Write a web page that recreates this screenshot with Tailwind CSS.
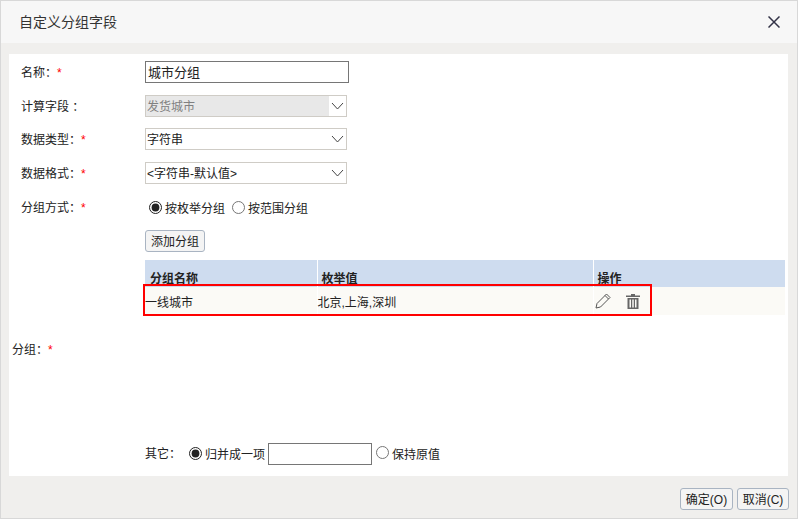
<!DOCTYPE html>
<html lang="zh-CN">
	<head>
		<meta charset="UTF-8" />
		<title>自定义分组字段</title>
		<script src="https://cdn.jsdelivr.net/npm/@tailwindcss/browser@4"></script>
	</head>
	<body class="bg-white">
		<div class="w-[798px] h-[519px] flex flex-col bg-[#f0efed] border border-[#d8d8d8] font-['Liberation_Sans','Noto_Sans_CJK_SC',sans-serif] text-[12px] leading-none text-[#222] overflow-hidden">
			<!-- Title bar -->
			<div class="h-[42px] shrink-0 bg-[#f7f7f7] flex items-center justify-between pl-[18px] pr-[17px]">
				<span class="text-[14px] text-[#333]">自定义分组字段</span>
				<svg class="w-[12px] h-[12px] text-[#333347]" viewBox="0 0 12 12" fill="none" stroke="currentColor" stroke-width="1.5">
					<path d="M0.5 0.5 L11.5 11.5 M11.5 0.5 L0.5 11.5" />
				</svg>
			</div>

			<!-- Form panel -->
			<div class="relative mt-[11px] ml-[8px] w-[779px] h-[422px] shrink-0 bg-white flex flex-col pt-[7px]">
				<div class="h-[22px] flex items-center pl-[12px]">
					<span class="w-[124px] mt-[2px]">名称：<b class="text-[#ff0000] font-normal">*</b></span>
					<div class="w-[204px] h-[22px] border border-[#767676] flex items-center pl-[2px] text-[13px]">城市分组</div>
				</div>
				<div class="h-[22px] mt-[12px] flex items-center pl-[12px]">
					<span class="w-[124px] mt-[2px]">计算字段 ：</span>
					<div class="w-[202px] h-[22px] border border-[#cfccc6] flex items-center">
						<span class="flex-1 h-full bg-[#e8e8e8] flex items-center pl-[1px] pt-[2px] text-[#808080]">发货城市</span>
						<svg class="w-[17px] h-[20px] text-[#444]" viewBox="0 0 17 20" fill="none" stroke="currentColor"><path d="M3 7 L8.5 13 L14 7" /></svg>
					</div>
				</div>
				<div class="h-[22px] mt-[11px] flex items-center pl-[12px]">
					<span class="w-[124px] mt-[2px]">数据类型：<b class="text-[#ff0000] font-normal">*</b></span>
					<div class="w-[202px] h-[22px] border border-[#cfccc6] flex items-center justify-between pl-[1px]">
						<span class="mt-[2px]">字符串</span>
						<svg class="w-[17px] h-[20px] text-[#444]" viewBox="0 0 17 20" fill="none" stroke="currentColor"><path d="M3 7 L8.5 13 L14 7" /></svg>
					</div>
				</div>
				<div class="h-[22px] mt-[12px] flex items-center pl-[12px]">
					<span class="w-[124px] mt-[2px]">数据格式：<b class="text-[#ff0000] font-normal">*</b></span>
					<div class="w-[202px] h-[22px] border border-[#cfccc6] flex items-center justify-between pl-[1px]">
						<span class="mt-[2px]">&lt;字符串-默认值&gt;</span>
						<svg class="w-[17px] h-[20px] text-[#444]" viewBox="0 0 17 20" fill="none" stroke="currentColor"><path d="M3 7 L8.5 13 L14 7" /></svg>
					</div>
				</div>
				<div class="h-[18px] mt-[14px] flex items-center pl-[12px]">
					<span class="w-[128px] mt-[2px]">分组方式：<b class="text-[#ff0000] font-normal">*</b></span>
					<input type="radio" name="mode" checked class="w-[13px] h-[13px] accent-[#222]" />
					<span class="ml-[3px] mt-[4px]">按枚举分组</span>
					<input type="radio" name="mode" class="ml-[7px] w-[13px] h-[13px] accent-[#222]" />
					<span class="ml-[3px] mt-[4px]">按范围分组</span>
				</div>

				<button class="ml-[136px] mt-[14px] pt-[2px] w-[60px] h-[22px] shrink-0 rounded-[3px] border border-[#a9b4c2] bg-[#f4f4f4]">添加分组</button>

				<!-- Group table -->
				<table class="ml-[136px] mt-[8px] w-[640px] table-fixed border-collapse">
					<thead>
						<tr class="h-[27px] bg-[#cedcef] font-bold">
							<th class="w-[172px] text-left align-bottom pl-[5px] pb-[2px] border-r border-white">分组名称</th>
							<th class="w-[276px] text-left align-bottom pl-[4px] pb-[2px] border-r border-white">枚举值</th>
							<th class="text-left align-bottom pl-[4px] pb-[2px]">操作</th>
						</tr>
					</thead>
					<tbody>
						<tr class="h-[28px] bg-[#fbfaf6]">
							<td class="border-r border-white pt-[3px]">一线城市</td>
							<td class="border-r border-white pt-[3px]">北京,上海,深圳</td>
							<td>
								<div class="flex items-center pl-[1px] gap-[15px] text-[#555]">
									<svg class="w-[16px] h-[16px]" viewBox="0 0 16 16" fill="none" stroke="currentColor">
										<path d="M1 15 L2 10.5 L11.5 1 L15 4.5 L5.5 14 Z M10 2.5 L13.5 6" />
									</svg>
									<svg class="w-[14px] h-[15px] text-[#666]" viewBox="0 0 14 15" fill="currentColor">
										<path d="M5 0 H9 V1.5 H14 V3 H0 V1.5 H5 Z" />
										<path d="M1.5 4 H12.5 V15 H1.5 Z M3.5 5.5 V13.5 H5 V5.5 Z M6.25 5.5 V13.5 H7.75 V5.5 Z M9 5.5 V13.5 H10.5 V5.5 Z" fill-rule="evenodd" />
									</svg>
								</div>
							</td>
						</tr>
					</tbody>
				</table>
				<!-- Red annotation box -->
				<div class="absolute left-[134px] top-[230px] w-[509px] h-[32px] border-2 border-[#ff0000]"></div>

				<div class="mt-[29px] pl-[3px] h-[12px]">分组：<b class="text-[#ff0000] font-normal">*</b></div>

				<div class="mt-[87px] h-[22px] flex items-center pl-[136px]">
					<span class="w-[44px]">其它：</span>
					<input type="radio" name="other" checked class="mb-[2px] w-[13px] h-[13px] accent-[#222]" />
					<span class="ml-[3px] mt-[2px]">归并成一项</span>
					<div class="ml-[3px] w-[104px] h-[22px] border border-[#767676]"></div>
					<input type="radio" name="other" class="ml-[4px] mb-[4px] w-[13px] h-[13px] accent-[#222]" />
					<span class="ml-[3px] mt-[2px]">保持原值</span>
				</div>
			</div>

			<!-- Footer -->
			<div class="flex justify-end gap-[4px] pr-[8px] mt-[12px]">
				<button class="w-[53px] h-[22px] pt-[1px] rounded-[3px] border border-[#a9b4c2] bg-[#f4f4f4]">确定(O)</button>
				<button class="w-[52px] h-[22px] pt-[1px] rounded-[3px] border border-[#a9b4c2] bg-[#f4f4f4]">取消(C)</button>
			</div>
		</div>
	</body>
</html>
